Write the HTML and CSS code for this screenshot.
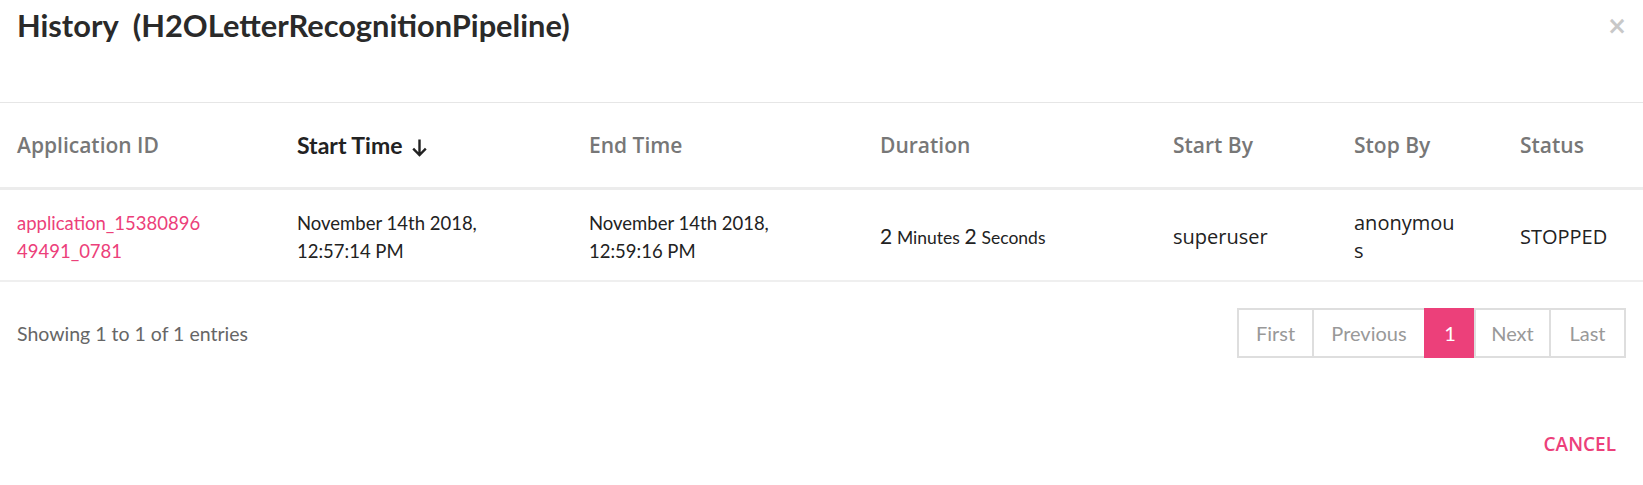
FILE: index.html
```html
<!DOCTYPE html>
<html>
<head>
<meta charset="utf-8">
<link rel="stylesheet" href="styles.css">
</head>
<body>
<div class="modal">
  <div class="modal-header">
    <h1 class="title">History&nbsp; (H2OLetterRecognitionPipeline)</h1>
    <button class="close">&times;</button>
  </div>
  <table class="grid">
    <colgroup>
      <col class="c1"><col class="c2"><col class="c3"><col class="c4"><col class="c5"><col class="c6"><col class="c7">
    </colgroup>
    <thead>
      <tr>
        <th>Application ID</th>
        <th class="sorted">Start Time <svg class="arrow" width="17" height="19" viewBox="0 0 17 19"><path d="M8.5 1.5V17M2.2 10.7l6.3 6.3 6.3-6.3" fill="none" stroke="#222" stroke-width="2.4"/></svg></th>
        <th>End Time</th>
        <th>Duration</th>
        <th>Start By</th>
        <th>Stop By</th>
        <th>Status</th>
      </tr>
    </thead>
    <tbody>
      <tr>
        <td><a class="appid" href="#">application_1538089649491_0781</a></td>
        <td class="date">November 14th 2018,<br>12:57:14 PM</td>
        <td class="date">November 14th 2018,<br>12:59:16 PM</td>
        <td class="dur"><span class="num">2</span> <span class="unit">Minutes</span> <span class="num">2</span> <span class="unit">Seconds</span></td>
        <td class="user">superuser</td>
        <td class="user"><div class="stopby">anonymous</div></td>
        <td class="user">STOPPED</td>
      </tr>
    </tbody>
  </table>
  <div class="table-footer">
    <div class="info">Showing 1 to 1 of 1 entries</div>
    <div class="pager">
      <span class="pg pg-first">First</span>
      <span class="pg pg-prev">Previous</span>
      <span class="pg pg-num active">1</span>
      <span class="pg pg-next">Next</span>
      <span class="pg pg-last">Last</span>
    </div>
  </div>
  <div class="modal-footer">
    <button class="cancel">CANCEL</button>
  </div>
</div>
</body>
</html>
```

FILE: styles.css
```css
html, body {
  margin: 0;
  padding: 0;
  background: #fff;
}
body {
  font-family: Lato, "Liberation Sans", sans-serif;
  color: #222;
}
.modal {
  width: 1643px;
}
.modal-header {
  display: flex;
  justify-content: space-between;
  align-items: flex-start;
  height: 103px;
  box-sizing: border-box;
  padding: 8px 16px 0 17px;
  border-bottom: 1px solid #e6e6e6;
}
.title {
  margin: 0;
  font-family: Lato, sans-serif;
  font-weight: 700;
  font-size: 30.8px;
  line-height: 36px;
  color: #2a2a2a;
}
.close {
  border: 0;
  background: none;
  padding: 0;
  margin-top: 6px;
  font-family: "DejaVu Sans", sans-serif;
  font-size: 24px;
  line-height: 24px;
  font-weight: 700;
  color: #c8c8c8;
  cursor: pointer;
}
.grid {
  width: 1643px;
  table-layout: fixed;
  border-collapse: collapse;
}
.c1 { width: 280px; }
.c2 { width: 292px; }
.c3 { width: 291px; }
.c4 { width: 293px; }
.c5 { width: 181px; }
.c6 { width: 166px; }
.c7 { width: 140px; }
.grid th {
  height: 84px;
  padding: 0 0 0 17px;
  text-align: left;
  font-family: "Open Sans", sans-serif;
  font-weight: 600;
  font-size: 21px;
  color: #777;
  border-bottom: 3px solid #ececec;
  white-space: nowrap;
}
.grid th.sorted {
  font-family: Lato, sans-serif;
  font-weight: 700;
  font-size: 23px;
  color: #222;
}
.arrow {
  vertical-align: -3px;
  margin-left: 3px;
}
.grid td {
  height: 86px;
  padding: 4px 0 0 17px;
  vertical-align: middle;
  font-size: 18.5px;
  line-height: 28.5px;
  color: #222;
  border-bottom: 2px solid #efefef;
}
.appid {
  display: block;
  width: 188px;
  word-break: break-all;
  color: #ec407a;
  text-decoration: none;
}
.dur .num {
  font-size: 21px;
}
.dur .unit {
  font-size: 17.5px;
}
.grid td.user {
  font-family: "Open Sans", sans-serif;
  font-size: 20px;
  color: #222;
}
.stopby {
  width: 104px;
  word-break: break-all;
}
.table-footer {
  display: flex;
  justify-content: space-between;
  align-items: center;
  padding: 0 17px 0 17px;
  margin-top: 26px;
}
.info {
  font-size: 19.5px;
  color: #666;
}
.pager {
  display: flex;
}
.pg {
  display: flex;
  align-items: center;
  justify-content: center;
  height: 50px;
  box-sizing: border-box;
  border: 2px solid #dedede;
  margin-left: -2px;
  font-size: 20px;
  color: #999;
}
.pg-first { width: 77px; margin-left: 0; }
.pg-prev { width: 114px; }
.pg-num { width: 52px; }
.pg-next { width: 77px; }
.pg-last { width: 77px; }
.pg.active {
  background: #ec407a;
  border-color: #ec407a;
  color: #fff;
  font-weight: 400;
}
.modal-footer {
  display: flex;
  justify-content: flex-end;
  padding: 73px 27px 0 0;
}
.cancel {
  border: 0;
  background: none;
  padding: 0;
  font-family: "Open Sans", sans-serif;
  font-weight: 600;
  font-size: 19px;
  color: #ec407a;
  cursor: pointer;
}
```
